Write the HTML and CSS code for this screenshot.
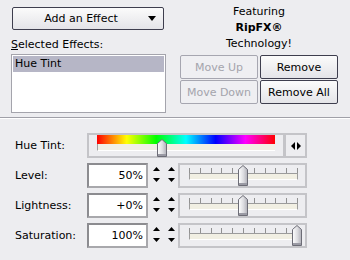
FILE: index.html
```html
<!DOCTYPE html>
<html lang="en">
<head>
<meta charset="UTF-8" />
<title>Effects</title>
<link rel="stylesheet" href="styles.css">
</head>
<body>
<svg class="defs" width="0" height="0">
  <defs>
    <linearGradient id="thumbfill" x1="0" x2="1" y1="0" y2="0">
      <stop offset="0" stop-color="#ffffff"/>
      <stop offset="0.55" stop-color="#dcdce0"/>
      <stop offset="1" stop-color="#b0b0b8"/>
    </linearGradient>
    <symbol id="thumb" viewBox="0 0 10 21">
      <path d="M0.5 4.5 L5 0.5 L9.5 4.5 V20.5 H0.5 Z" fill="url(#thumbfill)" stroke="#6c6c76"/>
      <rect x="1" y="18" width="8" height="2" fill="#9a9aa4"/>
    </symbol>
    <symbol id="thumb-s" viewBox="0 0 10 18">
      <path d="M0.5 4.5 L5 0.5 L9.5 4.5 V17.5 H0.5 Z" fill="url(#thumbfill)" stroke="#6c6c76"/>
      <rect x="1" y="15" width="8" height="2" fill="#9a9aa4"/>
    </symbol>
  </defs>
</svg>
<div class="top">
  <div class="left">
    <button class="btn add"><span>Add an Effect</span><span class="caret"></span></button>
    <div class="caption"><u>S</u>elected Effects:</div>
    <div class="list">
      <div class="item sel">Hue Tint</div>
    </div>
  </div>
  <div class="right">
    <div class="promo">Featuring<br><b>RipFX®</b><br>Technology!</div>
    <div class="btns">
      <button class="btn" disabled>Move Up</button>
      <button class="btn">Remove</button>
      <button class="btn" disabled>Move Down</button>
      <button class="btn">Remove All</button>
    </div>
  </div>
</div>
<div class="params">
  <div class="row">
    <div class="lbl">Hue Tint:</div>
    <div class="huebox">
      <div class="spectrum"></div>
      <div class="hue-track"></div>
      <svg class="thumb small" style="left:68px"><use href="#thumb-s"/></svg>
    </div>
    <div class="arrows"><span class="tri tri-l"></span><span class="tri tri-r"></span></div>
  </div>
  <div class="row">
    <div class="lbl">Level:</div>
    <div class="num">50%</div>
    <div class="spin"><span class="up"></span><span class="down"></span></div>
    <div class="spin"><span class="up"></span><span class="down"></span></div>
    <div class="slider"><div class="ticks"></div><div class="track"></div><svg class="thumb" style="left:58px"><use href="#thumb"/></svg></div>
  </div>
  <div class="row">
    <div class="lbl">Lightness:</div>
    <div class="num">+0%</div>
    <div class="spin"><span class="up"></span><span class="down"></span></div>
    <div class="spin"><span class="up"></span><span class="down"></span></div>
    <div class="slider"><div class="ticks"></div><div class="track"></div><svg class="thumb" style="left:58px"><use href="#thumb"/></svg></div>
  </div>
  <div class="row">
    <div class="lbl">Saturation:</div>
    <div class="num">100%</div>
    <div class="spin"><span class="up"></span><span class="down"></span></div>
    <div class="spin"><span class="up"></span><span class="down"></span></div>
    <div class="slider"><div class="ticks"></div><div class="track"></div><svg class="thumb" style="left:112px"><use href="#thumb"/></svg></div>
  </div>
</div>
</body>
</html>
```

FILE: styles.css
```css
html,body {margin:0;padding:0;background:#ededf0;color:#000;font-family:"DejaVu Sans",Verdana,sans-serif;font-size:11px;}
.defs {position:absolute;}

.top {display:flex;padding:7px 0 0 11px;height:110px;border-bottom:1px solid #a0a0a8;}
.left {width:155px;}
.btn {
  font:inherit;color:#000;background:linear-gradient(#fbfbfb,#e4e4e8);border:1px solid #3e3e4e;border-radius:2px;
  padding:0;height:24px;display:flex;align-items:center;justify-content:center;
}
.btn:disabled {color:#a4a4ac;border-color:#a6a6b0;background:#efeff2;}
.add {width:152px;height:23px;margin-left:1px;padding-right:14px;position:relative;}
.add .caret {position:absolute;right:7px;top:8px;border-left:4px solid transparent;border-right:4px solid transparent;border-top:5px solid #000;}
.caption {margin-top:7px;height:15px;line-height:15px;}
.list {margin-top:2px;height:55px;border:1px solid #a4a4ac;background:#fff;padding:1px;}
.item {height:16px;line-height:16px;padding-left:2px;}
.item.sel {background:#b6b6c6;}

.right {margin-left:14px;width:158px;display:flex;flex-direction:column;}
.promo {text-align:center;line-height:16px;margin-top:-3px;height:51px;}
.btns {display:grid;grid-template-columns:78px 78px;column-gap:2px;row-gap:1px;}

.params {border-top:1px solid #fff;padding:14px 0 0 15px;display:flex;flex-direction:column;gap:5px;}
.row {display:flex;align-items:center;height:25px;}
.row > * {flex:none;}
.lbl {width:72px;}

.huebox {position:relative;width:194px;height:21px;border:2px solid #c4c4c8;border-right-width:3px;}
.spectrum {margin-left:8px;width:178px;height:9px;background:linear-gradient(to right,#f00,#ff0,#0f0,#0ff,#00f,#f0f,#f00);}
.hue-track {margin-left:8px;width:177px;height:6px;background:#f1efe3;border-left:1px solid #a0a0a0;border-bottom:1px solid #fff;}
.arrows {width:19px;height:21px;border:2px solid #c4c4c8;border-left:none;display:flex;align-items:center;justify-content:center;gap:2px;}
.tri {display:block;width:0;height:0;border-top:4px solid transparent;border-bottom:4px solid transparent;}
.tri-l {border-right:4px solid #000;}
.tri-r {border-left:4px solid #000;}

.num {width:54px;height:21px;border:2px solid #a8a8ac;border-top-color:#8c8c90;border-left-color:#8c8c90;background:#fff;text-align:right;line-height:21px;padding-right:3px;}
.spin {width:7px;height:25px;display:flex;flex-direction:column;justify-content:space-between;padding:4px 0 6px;box-sizing:border-box;margin-left:5px;}
.spin + .spin {margin-left:8px;}
.spin span {display:block;width:7px;height:4px;background:#000;}
.spin .up {clip-path:polygon(50% 0,100% 100%,0 100%);}
.spin .down {clip-path:polygon(0 0,100% 0,50% 100%);}

.slider {position:relative;margin-left:3px;width:125px;height:21px;border:2px solid #c4c4c8;}
.ticks {
  margin:3px 0 0 9px;width:109px;height:5px;
  background:repeating-linear-gradient(to right,#909090 0 1px,transparent 1px 10.8px);
}
.track {margin-left:9px;width:107px;height:5px;background:#f1efe3;border:1px solid #9c9c9c;border-bottom-color:#fff;}
.thumb {position:absolute;top:0;width:10px;height:21px;}
.thumb.small {top:4px;height:18px;}
```
